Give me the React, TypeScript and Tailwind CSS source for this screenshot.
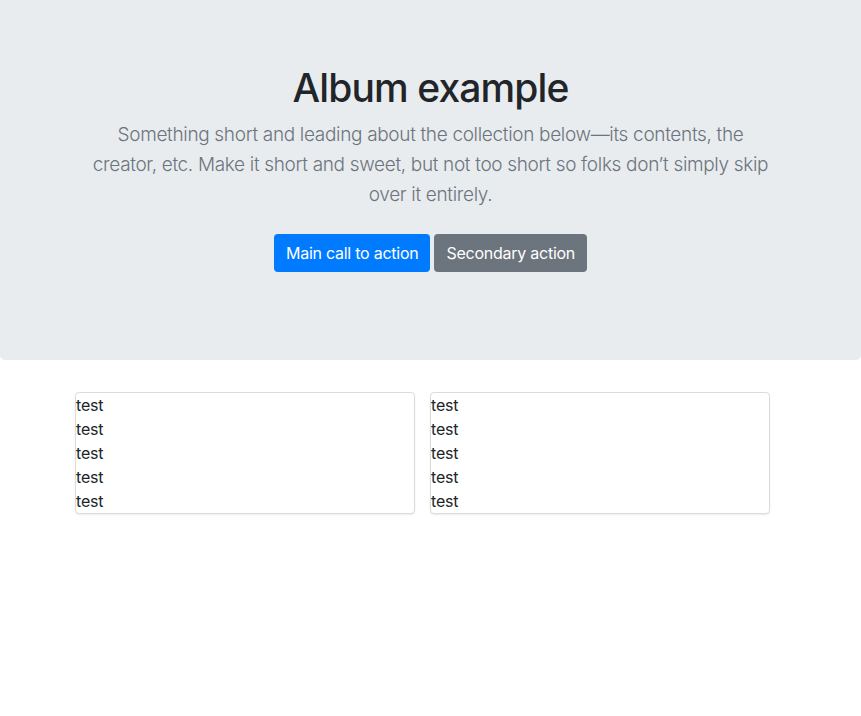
import React from "react";

function Box() {
  return (
    <div className="w-[340px] rounded-[4px] border border-[#dcdcdc] bg-white text-[16px] leading-[24px] text-[#212529] shadow-[0_1px_2px_rgba(0,0,0,0.08)] tracking-[-0.2px]">
      {["test", "test", "test", "test", "test"].map((t, i) => (
        <div key={i}>{t}</div>
      ))}
    </div>
  );
}

export default function App() {
  return (
    <div className="min-h-[716px] bg-white" style={{ fontFamily: "Inter, 'Liberation Sans', sans-serif" }}>
      <section className="h-[360px] rounded-b-[5px] bg-[#e9ecef] text-center pt-[64px]">
        <h1 className="text-[39px] leading-[48px] font-medium text-[#212529] tracking-[-0.9px]">Album example</h1>
        <p className="mx-auto mt-[8px] w-[690px] text-[19px] leading-[30px] font-light text-[#6c757d] tracking-[-0.33px]">
          Something short and leading about the collection below—its contents, the creator, etc. Make it short and sweet, but not too short so folks don’t simply skip over it entirely.
        </p>
        <div className="mt-[24px] flex justify-center gap-[4px]">
          <button className="h-[38px] rounded-[4px] bg-[#007bff] px-[12px] text-[16px] tracking-[-0.25px] text-white">Main call to action</button>
          <button className="h-[38px] rounded-[4px] bg-[#6c757d] px-[12px] text-[16px] tracking-[-0.25px] text-white">Secondary action</button>
        </div>
      </section>
      <div className="flex gap-[15px] pl-[75px] pt-[32px]">
        <Box />
        <Box />
      </div>
    </div>
  );
}
